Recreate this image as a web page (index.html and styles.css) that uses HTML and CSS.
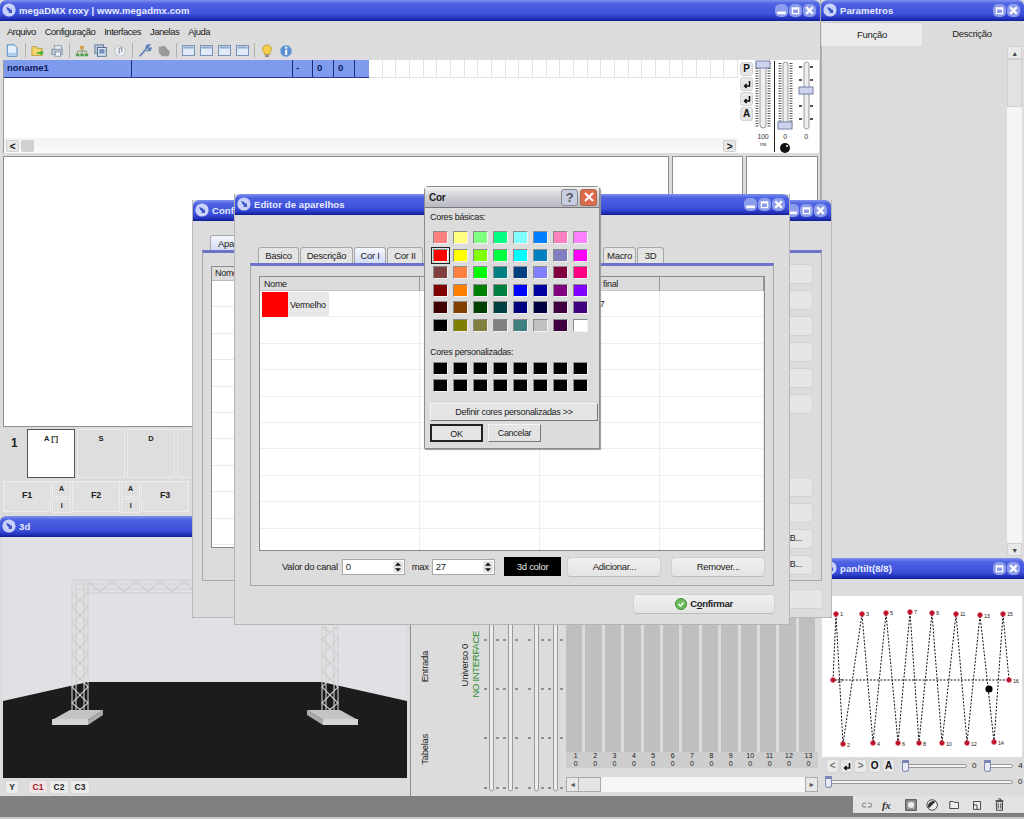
FILE: index.html
```
<!DOCTYPE html>
<html lang="pt">
<head>
<meta charset="utf-8">
<title>megaDMX roxy</title>
<link rel="stylesheet" href="styles.css">
</head>
<body>
<svg class="sprite" width="0" height="0" aria-hidden="true">
  <symbol id="g-min" viewBox="0 0 12 12"><rect x="2" y="7" width="8" height="2.4" fill="#fff"/></symbol>
  <symbol id="g-max" viewBox="0 0 12 12"><path d="M2.5 3h7v6.5h-7z M3.7 5v3.3h4.6V5z" fill="#fff" fill-rule="evenodd"/></symbol>
  <symbol id="g-close" viewBox="0 0 12 12"><path d="M3 3l6 6M9 3l-6 6" stroke="#fff" stroke-width="2.2" fill="none"/></symbol>
  <symbol id="g-app" viewBox="0 0 14 14"><circle cx="7" cy="7" r="6.6" fill="#c9d2fb"/><path d="M4 4l3.2 1 2 2.2.8-1.4V10H6l1.4-.9L5.4 7z" fill="#3c55c8"/></symbol>
  <symbol id="g-enter" viewBox="0 0 10 10"><path d="M7.5 2v5H3M4.6 5L2.6 7l2 2" stroke="#111" stroke-width="1.6" fill="none"/></symbol>
  <symbol id="g-win" viewBox="0 0 13 13"><rect x=".5" y="1.5" width="12" height="10" fill="#dfe9f7" stroke="#7a93b8"/><rect x="1.5" y="2.5" width="10" height="2" fill="#8faacb"/></symbol>
  <symbol id="g-spin" viewBox="0 0 10 12"><rect width="10" height="12" rx="3" fill="#e2e2e2"/><path d="M5 1.500l3 3.200H2zM5 10.500L2 7.300h6z" fill="#111"/></symbol>
</svg>

<div class="desktop">

  <section class="win win-main">
    <header class="titlebar">
      <svg class="tb-ico"><use href="#g-app"/></svg>
      <span class="tb-text">megaDMX roxy | www.megadmx.com</span>
      <span class="tb-btns">
        <svg class="tb-btn"><use href="#g-min"/></svg>
        <svg class="tb-btn"><use href="#g-max"/></svg>
        <svg class="tb-btn"><use href="#g-close"/></svg>
      </span>
    </header>
    <nav class="menu">
      <span>Arquivo</span><span>Configuração</span><span>Interfaces</span><span>Janelas</span><span>Ajuda</span>
    </nav>
    <div class="toolbar">
      <svg class="ti" viewBox="0 0 16 16"><path d="M1.5 1h8l3 3v10h-11z" fill="#e4f0fb" stroke="#3a7ab8"/><rect x="2" y="10" width="10" height="3" fill="#a9d0ee"/></svg>
      <i class="sep"></i>
      <svg class="ti" viewBox="0 0 16 16"><path d="M1 3h5l1 2h6v8H1z" fill="#f2d56a" stroke="#b99a35"/><path d="M7 9h4V7l3.5 3-3.5 3v-2H7z" fill="#3fae3a"/></svg>
      <svg class="ti" viewBox="0 0 16 16"><rect x="2" y="6" width="12" height="6" fill="#b8c4d2" stroke="#8595a8"/><rect x="5" y="2" width="8" height="4" fill="#e8edf3" stroke="#8595a8"/><rect x="6" y="9" width="6" height="5" fill="#eef2f6" stroke="#8595a8"/></svg>
      <i class="sep"></i>
      <svg class="ti" viewBox="0 0 16 16"><rect x="6" y="2" width="4" height="4" fill="#d49b3c"/><path d="M3 11V8h10v3M8 6v5" stroke="#7f8c6a" fill="none"/><rect x="1" y="11" width="4" height="3" fill="#4f9a47"/><rect x="6" y="11" width="4" height="3" fill="#4f9a47"/><rect x="11" y="11" width="4" height="3" fill="#4f9a47"/></svg>
      <svg class="ti" viewBox="0 0 16 16"><rect x="1" y="1" width="10" height="10" fill="#b9c9de" stroke="#5d7597"/><rect x="4" y="4" width="10" height="10" fill="#dbe6f3" stroke="#46658e"/><rect x="6" y="6" width="6" height="5" fill="#6f8fb8"/></svg>
      <svg class="ti" viewBox="0 0 16 16"><circle cx="8" cy="8" r="6" fill="#eceff3" stroke="#b5bcc6"/><path d="M7 11V5l3-1v5" stroke="#6c7480" fill="none"/></svg>
      <i class="sep"></i>
      <svg class="ti" viewBox="0 0 16 16"><path d="M2 14l7-8M9 6l1-4 3-1-2 3 2 2 2-2-1 3-4 1" stroke="#5f83ba" stroke-width="2" fill="none"/></svg>
      <svg class="ti" viewBox="0 0 16 16"><path d="M2 3l7-1 3 4 3 3-2 5H6L2 10z" fill="#9a9a9a"/></svg>
      <i class="sep"></i>
      <svg class="ti ti-win"><use href="#g-win"/></svg>
      <svg class="ti ti-win"><use href="#g-win"/></svg>
      <svg class="ti ti-win"><use href="#g-win"/></svg>
      <svg class="ti ti-win"><use href="#g-win"/></svg>
      <i class="sep"></i>
      <svg class="ti" viewBox="0 0 16 16"><path d="M8 1a5 5 0 0 1 3 9v2H5v-2a5 5 0 0 1 3-9z" fill="#f6d04c" stroke="#c79a2c"/><rect x="6" y="12" width="4" height="3" fill="#8a8a8a"/></svg>
      <svg class="ti" viewBox="0 0 16 16"><circle cx="8" cy="8" r="6.5" fill="#5a8fd2" stroke="#8fb2de"/><rect x="7" y="3" width="2.4" height="2.4" fill="#fff"/><rect x="7" y="6.5" width="2.4" height="6" fill="#fff"/></svg>
    </div>

    <div class="top-row">
      <div class="seq">
        <div class="seq-head">
          <b class="sh sh-name">noname1</b>
          <b class="sh sh-wide"></b>
          <b class="sh sh-dash">-</b>
          <b class="sh sh-num">0</b>
          <b class="sh sh-num">0</b>
          <b class="sh sh-fill"></b>
          <div class="cells"><i></i><i></i><i></i><i></i><i></i><i></i><i></i><i></i><i></i><i></i><i></i><i></i><i></i><i></i><i></i><i></i><i></i><i></i><i></i><i></i><i></i><i></i><i></i><i></i><i></i><i></i><i></i></div>
        </div>
        <div class="seq-body"></div>
        <div class="seq-scroll">
          <b class="arrow">&lt;</b><b class="arrow arrow-off"></b><span class="grow"></span><b class="arrow">&gt;</b>
        </div>
      </div>
      <div class="master">
        <div class="pbtns">
          <b class="pbtn">P</b>
          <b class="pbtn"><svg class="enter"><use href="#g-enter"/></svg></b>
          <b class="pbtn pbtn-off"><svg class="enter"><use href="#g-enter"/></svg></b>
          <b class="pbtn">A</b>
        </div>
        <svg class="master-faders" viewBox="755 60 65 93">
          <path d="M759 63v65M771 63v65" stroke="#555" stroke-width="3" stroke-dasharray="1 1.5"/>
          <rect x="762" y="62" width="6" height="66" rx="3" fill="#eee" stroke="#999"/>
          <rect x="758" y="61" width="14" height="7" fill="#cdd3ec" stroke="#7780a8"/>
          <path d="M776.5 61v91" stroke="#222"/>
          <path d="M782 63v65M793 63v65" stroke="#555" stroke-width="3" stroke-dasharray="1 1.5"/>
          <rect x="785" y="62" width="5" height="66" rx="2.5" fill="#eee" stroke="#999"/>
          <rect x="780" y="122" width="14" height="7" fill="#cdd3ec" stroke="#7780a8"/>
          <path d="M802.500 66v60M813.500 66v60" stroke="#555" stroke-width="3" stroke-dasharray="2 11"/>
          <rect x="806" y="62" width="5" height="67" rx="2.5" fill="#eee" stroke="#999"/>
          <rect x="801" y="87" width="14" height="7" fill="#cdd3ec" stroke="#7780a8"/>
          <text x="765" y="139" class="mf-t">100</text>
          <text x="765" y="146" class="mf-s">ms</text>
          <text x="787" y="139" class="mf-t">0</text>
          <text x="808" y="139" class="mf-t">0</text>
          <circle cx="787" cy="148" r="5" fill="#111"/>
          <circle cx="789" cy="146" r="1" fill="#fff"/>
        </svg>
      </div>
    </div>

    <div class="views">
      <div class="view view-a"></div>
      <div class="view view-b"></div>
      <div class="view view-c"></div>
    </div>

    <div class="scene-row">
      <b class="scene-no">1</b>
      <b class="scene scene-on">A [']</b>
      <b class="scene">S</b>
      <b class="scene">D</b>
      <b class="scene"></b>
    </div>
    <div class="fkeys">
      <b class="fk">F1</b>
      <span class="ai"><b>A</b><b>I</b></span>
      <b class="fk">F2</b>
      <span class="ai"><b>A</b><b>I</b></span>
      <b class="fk">F3</b>
    </div>
  </section>

  <section class="win win-params">
    <header class="titlebar">
      <svg class="tb-ico"><use href="#g-app"/></svg>
      <span class="tb-text">Parametros</span>
      <span class="tb-btns">
        <svg class="tb-btn"><use href="#g-max"/></svg>
        <svg class="tb-btn"><use href="#g-close"/></svg>
      </span>
    </header>
    <div class="param-tabs">
      <span class="ptab ptab-on">Função</span>
      <span class="ptab">Descrição</span>
    </div>
    <div class="param-body">
      <div class="vscroll">
        <b class="vs-btn">&#9650;</b>
        <b class="vs-thumb"></b>
        <span class="grow"></span>
        <b class="vs-btn">&#9660;</b>
      </div>
    </div>
  </section>

  <section class="win win-3d">
    <header class="titlebar">
      <svg class="tb-ico"><use href="#g-app"/></svg>
      <span class="tb-text">3d</span>
    </header>
    <svg class="stage" viewBox="3 536 404 241">
      <rect x="3" y="536" width="404" height="241" fill="#e1e1e5"/>
      <path d="M3 700L88 681H322L407 700V777H3z" fill="#1c1c1c"/>
      <g class="truss">
        <path d="M72 579H192M74 583H192M74 588H192M84 592H192"/>
        <path d="M88 580L100 591 112 580 124 591 136 580 148 591 160 580 172 591 184 580 192 588"/>
        <path d="M72 580V715M76 580V715M84 580V715M88 580V715"/>
        <path d="M72 592L88 606 72 622 88 638 72 654 88 670 72 686 88 702 72 715"/>
        <path d="M88 592L72 606 88 622 72 638 88 654 72 670 88 686 72 702 88 715"/>
        <path d="M322 625V715M326 625V715M334 625V715M338 625V715"/>
        <path d="M338 625L322 638 338 654 322 670 338 686 322 702 338 715"/>
        <path d="M322 625L338 638 322 654 338 670 322 686 338 702 322 715"/>
      </g>
      <path d="M52 719L70 709H103L88 719z" fill="#c4c4c4"/>
      <path d="M52 718H88V724H52z" fill="#d4d4d4"/>
      <path d="M88 719L103 709V714L88 724z" fill="#aaa"/>
      <path d="M358 719L340 709H307L323 719z" fill="#c4c4c4"/>
      <path d="M323 718H358V724H323z" fill="#d4d4d4"/>
      <path d="M323 719L307 709V714L323 724z" fill="#aaa"/>
    </svg>
    <div class="cam-bar">
      <b class="cam">Y</b>
      <b class="cam cam-on">C1</b>
      <b class="cam">C2</b>
      <b class="cam">C3</b>
    </div>
  </section>

  <section class="win win-mix">
    <div class="mix-labels">
      <span class="vtext vt-entrada">Entrada</span>
      <span class="vtext vt-tabelas">Tabelas</span>
    </div>
    <div class="mix-uni">
      <span class="vtext vt-uni">Universo 0</span>
      <span class="vtext vt-noif">NO INTERFACE</span>
    </div>
    <svg class="mix-faders" viewBox="484 600 82 196">
      <g class="ftrack">
        <rect x="489.500" y="600" width="4" height="191" rx="2"/>
        <rect x="508.500" y="600" width="4" height="191" rx="2"/>
        <rect x="534.500" y="600" width="4" height="191" rx="2"/>
        <rect x="553.500" y="600" width="4" height="191" rx="2"/>
      </g>
      <path class="fticks" d="M484 640h3M496 640h3M503 640h3M515 640h3M528 640h3M541 640h3M548 640h3M560 640h3M484 689h3M496 689h3M503 689h3M515 689h3M528 689h3M541 689h3M548 689h3M560 689h3M484 738h3M496 738h3M503 738h3M515 738h3M528 738h3M541 738h3M548 738h3M560 738h3M484 788h3M496 788h3M503 788h3M515 788h3M528 788h3M541 788h3M548 788h3M560 788h3"/>
    </svg>
    <div class="mix-strips">
      <div class="strips">
        <div class="strip"><i></i><span>1<br>0</span></div>
        <div class="strip"><i></i><span>2<br>0</span></div>
        <div class="strip"><i></i><span>3<br>0</span></div>
        <div class="strip"><i></i><span>4<br>0</span></div>
        <div class="strip"><i></i><span>5<br>0</span></div>
        <div class="strip"><i></i><span>6<br>0</span></div>
        <div class="strip"><i></i><span>7<br>0</span></div>
        <div class="strip"><i></i><span>8<br>0</span></div>
        <div class="strip"><i></i><span>9<br>0</span></div>
        <div class="strip"><i></i><span>10<br>0</span></div>
        <div class="strip"><i></i><span>11<br>0</span></div>
        <div class="strip"><i></i><span>12<br>0</span></div>
        <div class="strip"><i></i><span>13<br>0</span></div>
      </div>
      <div class="hscroll">
        <b class="hs-btn">&#9668;</b><b class="hs-thumb"></b><span class="grow"></span><b class="hs-btn">&#9658;</b>
      </div>
    </div>
  </section>

  <section class="win win-pan">
    <header class="titlebar">
      <svg class="tb-ico"><use href="#g-app"/></svg>
      <span class="tb-text tb-pan">pan/tilt(8/8)</span>
      <span class="tb-btns">
        <svg class="tb-btn"><use href="#g-max"/></svg>
        <svg class="tb-btn"><use href="#g-close"/></svg>
      </span>
    </header>
    <svg class="pan-canvas" viewBox="822 596 200 161">
      <rect x="822" y="596" width="200" height="161" fill="#fff"/>
      <path class="pan-line" d="M833 680L836 614 843 744 862 614 873 743 886 613 898 743 910 612 919 743 932 613 942 743 956 614 967 743 980 615 994 742 1003 614 1009 680Z"/>
      <g class="pan-pts">
        <path d="M836 611.500v5M833.500 614h5M843 741.500v5M840.500 744h5M862 611.500v5M859.500 614h5M873 740.500v5M870.500 743h5M886 610.500v5M883.500 613h5M898 740.500v5M895.500 743h5M910 609.500v5M907.500 612h5M919 740.500v5M916.500 743h5M932 610.500v5M929.500 613h5M942 740.500v5M939.500 743h5M956 611.500v5M953.500 614h5M967 740.500v5M964.500 743h5M980 612.500v5M977.500 615h5M994 739.500v5M991.500 742h5M1003 611.500v5M1000.500 614h5M1009 677.500v5M1006.500 680h5M833 677.500v5M830.500 680h5"/>
      </g>
      <g class="pan-lbl">
        <text x="840" y="616">1</text><text x="847" y="747">2</text><text x="866" y="616">3</text><text x="877" y="746">4</text><text x="890" y="615">5</text><text x="902" y="746">6</text><text x="914" y="614">7</text><text x="923" y="746">8</text><text x="936" y="615">9</text><text x="946" y="746">10</text><text x="960" y="616">11</text><text x="971" y="746">12</text><text x="984" y="618">13</text><text x="998" y="745">14</text><text x="1007" y="616">15</text><text x="1013" y="683">16</text><text x="837" y="683">17</text>
      </g>
      <circle cx="989" cy="689" r="3.6" fill="#000"/>
    </svg>
    <div class="pan-ctrl">
      <b class="pbtn pbtn-off">&lt;</b>
      <b class="pbtn"><svg class="enter"><use href="#g-enter"/></svg></b>
      <b class="pbtn pbtn-off">&gt;</b>
      <b class="pbtn">O</b>
      <b class="pbtn">A</b>
      <span class="slider slider-a"><i class="knob"></i></span>
      <span class="sl-val">0</span>
      <span class="slider slider-b"><i class="knob"></i></span>
      <span class="sl-val">4</span>
    </div>
    <div class="pan-ctrl pan-ctrl-2">
      <span class="slider slider-c"><i class="knob"></i></span>
      <span class="sl-val">0</span>
    </div>
  </section>

  <div class="layers">
    <svg class="li" viewBox="0 0 16 16"><path d="M2 8a3 3 0 0 1 3-3h2v1.500H5a1.500 1.500 0 0 0 0 3h2V11H5a3 3 0 0 1-3-3zM9 5h2a3 3 0 0 1 0 6H9V9.500h2a1.500 1.500 0 0 0 0-3H9z" fill="#999"/></svg>
    <span class="li-fx">fx</span>
    <svg class="li" viewBox="0 0 16 16"><rect x="2" y="2" width="12" height="12" fill="#999" stroke="#333"/><circle cx="8" cy="8" r="3.500" fill="#eee"/></svg>
    <svg class="li" viewBox="0 0 16 16"><circle cx="7" cy="8" r="6" fill="#eee" stroke="#333"/><path d="M3 12A6 6 0 0 1 11 4z" fill="#333"/></svg>
    <svg class="li" viewBox="0 0 16 16"><path d="M2 4h4l1 1h5v7H2z" fill="#eee" stroke="#333"/></svg>
    <svg class="li" viewBox="0 0 16 16"><path d="M4 4h8v9H4z" fill="#eee" stroke="#333"/><path d="M4 8h4v5" fill="none" stroke="#333"/></svg>
    <svg class="li" viewBox="0 0 16 16"><path d="M5 4h7v10H5zM4 3h9M7 1h3v2" fill="#ddd" stroke="#333"/><path d="M7 6v6M10 6v6" stroke="#333"/></svg>
  </div>

  <section class="win win-config">
    <header class="titlebar">
      <svg class="tb-ico"><use href="#g-app"/></svg>
      <span class="tb-text">Config</span>
      <span class="tb-btns">
        <svg class="tb-btn"><use href="#g-min"/></svg>
        <svg class="tb-btn"><use href="#g-max"/></svg>
        <svg class="tb-btn"><use href="#g-close"/></svg>
      </span>
    </header>
    <div class="cfg-tabs"><span class="tab tab-on tab-cfg">Aparelhos</span></div>
    <div class="cfg-panel">
      <div class="cfg-table">
        <div class="cfg-head">Nome</div>
        <div class="cfg-rows"><i></i><i></i><i></i><i></i><i></i><i></i><i></i><i></i><i></i><i></i></div>
      </div>
      <div class="cfg-btns">
        <b class="cfg-btn"></b><b class="cfg-btn"></b><b class="cfg-btn"></b><b class="cfg-btn"></b><b class="cfg-btn"></b><b class="cfg-btn"></b>
        <span class="grow"></span>
        <b class="cfg-btn"></b><b class="cfg-btn"></b><b class="cfg-btn">B...</b><b class="cfg-btn">B...</b>
      </div>
    </div>
    <div class="cfg-foot"><b class="cfg-ok"></b></div>
  </section>

  <section class="win win-editor">
    <header class="titlebar">
      <svg class="tb-ico"><use href="#g-app"/></svg>
      <span class="tb-text">Editor de aparelhos</span>
      <span class="tb-btns">
        <svg class="tb-btn"><use href="#g-min"/></svg>
        <svg class="tb-btn"><use href="#g-max"/></svg>
        <svg class="tb-btn"><use href="#g-close"/></svg>
      </span>
    </header>
    <div class="ed-tabs">
      <span class="tab t-basico">Basico</span>
      <span class="tab t-desc">Descrição</span>
      <span class="tab tab-on t-cor1">Cor I</span>
      <span class="tab t-cor2">Cor II</span>
      <span class="tab-gap"></span>
      <span class="tab t-macro">Macro</span>
      <span class="tab t-3d">3D</span>
    </div>
    <div class="ed-panel">
      <div class="ed-table">
        <div class="ed-row ed-head"><span>Nome</span><span></span><span class="val-final">Valor final</span><span></span></div>
        <div class="ed-row"><span class="color-cell"><i class="red"></i><em>Vermelho</em></span><span></span><span class="val-27">27</span><span></span></div>
        <div class="ed-row"><span></span><span></span><span></span><span></span></div>
        <div class="ed-row"><span></span><span></span><span></span><span></span></div>
        <div class="ed-row"><span></span><span></span><span></span><span></span></div>
        <div class="ed-row"><span></span><span></span><span></span><span></span></div>
        <div class="ed-row"><span></span><span></span><span></span><span></span></div>
        <div class="ed-row"><span></span><span></span><span></span><span></span></div>
        <div class="ed-row"><span></span><span></span><span></span><span></span></div>
        <div class="ed-row"><span></span><span></span><span></span><span></span></div>
        <div class="ed-row"><span></span><span></span><span></span><span></span></div>
      </div>
      <div class="ed-form">
        <label class="f-label">Valor do canal</label>
        <span class="spin"><span>0</span><svg class="spin-btn"><use href="#g-spin"/></svg></span>
        <label class="f-label f-max">max</label>
        <span class="spin"><span>27</span><svg class="spin-btn"><use href="#g-spin"/></svg></span>
        <b class="btn-3d">3d color</b>
        <b class="xbtn btn-add">Adicionar...</b>
        <b class="xbtn btn-rem">Remover...</b>
      </div>
    </div>
    <div class="ed-foot">
      <b class="xbtn btn-ok">
        <svg class="ok-ico" viewBox="0 0 12 12"><circle cx="6" cy="6" r="5.500" fill="#6dbb5a" stroke="#3e8e3a"/><path d="M3.500 6l2 2 3-3.500" stroke="#fff" stroke-width="1.500" fill="none"/></svg>
        <span>C<u>o</u>nfirmar</span>
      </b>
    </div>
  </section>

  <section class="dlg">
    <header class="dlg-title">
      <span>Cor</span>
      <b class="dlg-help">?</b>
      <b class="dlg-close"><svg class="dlg-x" viewBox="0 0 12 12"><path d="M2 2l8 8M10 2l-8 8" stroke="#fff" stroke-width="2"/></svg></b>
    </header>
    <div class="dlg-body">
      <p class="dlg-label">Cores básicas:</p>
      <div class="swatches">
        <i class="sw c1"></i><i class="sw c2"></i><i class="sw c3"></i><i class="sw c4"></i><i class="sw c5"></i><i class="sw c6"></i><i class="sw c7"></i><i class="sw c8"></i>
        <i class="sw c9 sw-sel"></i><i class="sw c10"></i><i class="sw c11"></i><i class="sw c12"></i><i class="sw c13"></i><i class="sw c14"></i><i class="sw c15"></i><i class="sw c16"></i>
        <i class="sw c17"></i><i class="sw c18"></i><i class="sw c19"></i><i class="sw c20"></i><i class="sw c21"></i><i class="sw c22"></i><i class="sw c23"></i><i class="sw c24"></i>
        <i class="sw c25"></i><i class="sw c26"></i><i class="sw c27"></i><i class="sw c28"></i><i class="sw c29"></i><i class="sw c30"></i><i class="sw c31"></i><i class="sw c32"></i>
        <i class="sw c33"></i><i class="sw c34"></i><i class="sw c35"></i><i class="sw c36"></i><i class="sw c37"></i><i class="sw c38"></i><i class="sw c39"></i><i class="sw c40"></i>
        <i class="sw c41"></i><i class="sw c42"></i><i class="sw c43"></i><i class="sw c44"></i><i class="sw c45"></i><i class="sw c46"></i><i class="sw c47"></i><i class="sw c48"></i>
      </div>
      <p class="dlg-label dlg-label-2">Cores personalizadas:</p>
      <div class="swatches">
        <i class="sw c41"></i><i class="sw c41"></i><i class="sw c41"></i><i class="sw c41"></i><i class="sw c41"></i><i class="sw c41"></i><i class="sw c41"></i><i class="sw c41"></i>
        <i class="sw c41"></i><i class="sw c41"></i><i class="sw c41"></i><i class="sw c41"></i><i class="sw c41"></i><i class="sw c41"></i><i class="sw c41"></i><i class="sw c41"></i>
      </div>
      <b class="dbtn dbtn-def">Definir cores personalizadas &gt;&gt;</b>
      <div class="dlg-actions">
        <b class="dbtn dbtn-ok">OK</b>
        <b class="dbtn dbtn-cancel">Cancelar</b>
      </div>
    </div>
  </section>

</div>
</body>
</html>
```
FILE: styles.css
```
* { box-sizing: border-box; }
html, body { margin: 0; padding: 0; }
body { font: 9px/1.2 "Liberation Sans", Arial, sans-serif; letter-spacing: -.3px; color: #222; }
.sprite { position: absolute; }
i, em, b { font-style: normal; }
p { margin: 0; }
.grow { flex: 1; }

.desktop {
  position: relative;
  width: 1024px;
  height: 819px;
  overflow: hidden;
  background: #808080;
  border-bottom: 2px solid #c8c8c8;
}

/* Windows */
.win { position: absolute; display: flex; flex-direction: column; background: #dcdcdc; }
.titlebar {
  flex: none;
  display: flex;
  align-items: center;
  height: 21px;
  padding: 0 3px 1px 2px;
  border-radius: 6px 6px 0 0;
  background: linear-gradient(#7f92ee 0, #4d62e2 18%, #3d50dc 68%, #2433bb 88%, #101c92 100%);
}
.tb-ico { width: 14px; height: 14px; flex: none; }
.tb-text {
  margin-left: 3px;
  font: bold 9.500px "Liberation Sans", sans-serif;
  letter-spacing: .1px;
  color: #e8ecff;
}
.tb-btns { display: flex; gap: 1px; margin-left: auto; margin-right: 1px; }
.tb-btn { width: 13px; height: 13px; border-radius: 5px; background: #8d9dec; }

.win-main { left: 0; top: 0; width: 821px; height: 796px; border-right: 1px solid #a8a8a8; }
.win-params { left: 821px; top: 0; width: 203px; height: 558px; }
.win-3d { left: 0; top: 516px; width: 411px; height: 280px; border-right: 1px solid #8c8c8c; }
.win-mix { left: 411px; top: 600px; width: 410px; height: 196px; flex-direction: row; }
.win-pan { left: 821px; top: 558px; width: 203px; height: 238px; }
.win-config { left: 192px; top: 200px; width: 640px; height: 418px; border: 1px solid #b8b8b8; border-top: 0; }
.win-editor { left: 234px; top: 194px; width: 556px; height: 431px; border: 1px solid #b4b4b4; border-top: 0; }

/* Main */
.menu { display: flex; gap: 9px; height: 21px; padding: 5px 0 0 7px; font-size: 9.500px; letter-spacing: -.5px; }
.toolbar { display: flex; align-items: center; height: 17px; padding-left: 6px; gap: 5px; }
.ti { width: 14px; height: 14px; flex: none; }
.ti-win { width: 13px; height: 13px; }
.sep { width: 1px; height: 15px; background: #b0b0b0; }

.top-row { display: flex; height: 93px; margin: 1px 0 0 3px; }
.seq { width: 735px; display: flex; flex-direction: column; background: #fff; border-left: 1px solid #999; }
.seq-head { display: flex; height: 18px; border-bottom: 1px solid #2a3a90; background: #7f9bee; }
.sh { height: 100%; padding: 2px 3px 0; font-size: 9.500px; letter-spacing: 0; border-right: 1px solid #1c2c80; color: #0c1a60; }
.sh-name { width: 128px; }
.sh-wide { width: 161px; }
.sh-dash { width: 20px; }
.sh-num { width: 21px; padding-left: 4px; }
.sh-fill { width: 14px; border-right: 0; }
.cells { flex: 1; display: flex; margin-bottom: -1px; background: #fff; }
.cells i { flex: 1; border-right: 1px solid #e2e2e2; border-bottom: 1px solid #e2e2e2; }
.seq-body { flex: 1; }
.seq-scroll { display: flex; align-items: center; height: 15px; padding: 0 1px; background: linear-gradient(#f2f2f2, #fbfbfb); }
.arrow { width: 13px; height: 12px; margin: 0 1px; font-size: 10px; line-height: 11px; text-align: center; background: #e8e8e8; border: 1px solid #cfcfcf; border-radius: 2px; color: #111; }
.arrow-off { background: #d0d0d0; }

.master { flex: 1; display: flex; background: #fff; margin-right: 1px; }
.pbtns { display: flex; flex-direction: column; gap: 1px; padding: 2px 0 0 2px; background: #fff; }
.pbtn {
  display: flex;
  align-items: center;
  justify-content: center;
  width: 13px;
  height: 14px;
  font-size: 10px;
  background: #e6e6e6;
  border: 1px solid #d2d2d2;
  border-radius: 3px;
  color: #111;
}
.pbtn-off { color: #777; background: #eaeaea; }
.enter { width: 10px; height: 10px; }
.master-faders { width: 65px; height: 93px; flex: none; }
.mf-t { font-size: 7px; text-anchor: middle; fill: #333; }
.mf-s { font-size: 5px; text-anchor: middle; fill: #333; }

.views { display: flex; gap: 3px; height: 271px; margin: 3px 2px 0 3px; }
.view { background: #fff; border: 1px solid #8f8f8f; }
.view-a { width: 666px; }
.view-b { width: 71px; }
.view-c { flex: 1; }

.scene-row { display: flex; gap: 2px; height: 50px; margin: 2px 0 0 3px; }
.scene-no { width: 22px; padding: 7px 0 0 8px; font-size: 12px; }
.scene { width: 48px; height: 49px; padding-top: 4px; font-size: 7.500px; letter-spacing: 0; text-align: center; background: #dedede; border: 1px solid #ebebeb; }
.scene-on { background: #fff; border: 1px solid #555; }
.fkeys { display: flex; gap: 1px; height: 32px; margin: 2px 0 0 3px; }
.fk { width: 48px; height: 31px; padding-top: 8px; font-size: 9px; text-align: center; background: #e0e0e0; border: 1px solid #ededed; }
.ai { width: 19px; display: flex; flex-direction: column; gap: 1px; }
.ai b { flex: 1; font-size: 7px; text-align: center; padding-top: 3px; background: #e0e0e0; border: 1px solid #ededed; }

/* Parametros */
.param-tabs { display: flex; height: 25px; padding: 1px 0 0 1px; font-size: 9.500px; }
.ptab { width: 100px; padding-top: 6px; text-align: center; }
.ptab-on { background: #ebebeb; border-top: 1px solid #c8c8c8; }
.param-body { flex: 1; display: flex; justify-content: flex-end; padding: 0 2px 2px 0; border-left: 1px solid #b0b0b0; }
.vscroll { width: 15px; display: flex; flex-direction: column; background: #f5f5f5; }
.vs-btn { height: 13px; font-size: 7px; line-height: 13px; text-align: center; color: #444; background: #e8e8e8; border: 1px solid #d0d0d0; }
.vs-thumb { height: 48px; background: #e2e2e2; border: 1px solid #d0d0d0; }

/* 3D */
.stage { display: block; width: 404px; height: 241px; margin: 0 0 0 3px; flex: none; }
.truss path { fill: none; stroke: #cfcfcf; stroke-width: 1.100; }
.cam-bar { display: flex; gap: 1px; height: 19px; padding: 2px 0 0 5px; background: #dcdcdc; }
.cam { width: 14px; height: 14px; font-size: 8.500px; letter-spacing: 0; line-height: 13px; text-align: center; background: #ececec; border: 1px solid #d6d6d6; border-radius: 3px; }
.cam:nth-child(2) { margin-left: 8px; }
.cam-on { color: #a3162a; background: #f0e4e4; }
.cam:nth-child(n+2) { width: 20px; }

/* Mix panel */
.vtext { display: block; writing-mode: vertical-rl; transform: rotate(180deg); white-space: nowrap; }
.mix-labels { width: 24px; padding: 51px 0 0 8px; font-size: 9.500px; }
.vt-tabelas { margin-top: 52px; }
.mix-uni { width: 49px; display: flex; justify-content: flex-end; font-size: 9.500px; line-height: 11px; align-items: flex-end; padding: 0 3px 98px 0; }
.vt-uni { margin-bottom: 12px; }
.vt-noif { color: #2c8f2c; }
.mix-faders { width: 82px; height: 196px; flex: none; }
.ftrack rect { fill: #ececec; stroke: #9a9a9a; }
.fticks { stroke: #444; stroke-width: 1; }
.mix-strips { flex: 1; display: flex; flex-direction: column; padding-right: 3px; }
.strips { display: flex; height: 168px; }
.strip { flex: 1; display: flex; flex-direction: column; }
.strip i { flex: 1; background: #bfbfbf; margin-right: 3px; }
.strip span { height: 16px; font-size: 7px; line-height: 8px; letter-spacing: 0; text-align: center; background: #cdcdcd; }
.hscroll { display: flex; height: 15px; margin-top: 9px; background: #f6f6f6; }
.hs-btn { width: 13px; font-size: 7px; line-height: 13px; text-align: center; color: #555; background: #e8e8e8; border: 1px solid #aaa; }
.hs-thumb { width: 22px; background: #e4e4e4; border: 1px solid #aaa; border-left: 0; }

/* Pan tilt */
.pan-canvas { display: block; width: 200px; height: 161px; margin: 17px 0 0 1px; flex: none; }
.pan-line { fill: none; stroke: #111; stroke-width: 1; stroke-dasharray: 2 1.500; }
.pan-pts path { stroke: #c0102a; stroke-width: 3; fill: none; }
.pan-lbl text { font-size: 5.500px; fill: #222; }
.pan-ctrl { display: flex; align-items: center; gap: 1px; height: 16px; margin-top: 1px; padding-left: 5px; font-size: 8px; }
.pan-ctrl-2 { margin-top: 0; padding-left: 4px; }
.slider { position: relative; display: block; height: 4px; background: #eee; border: 1px solid #999; border-radius: 2px; }
.slider-a { width: 65px; margin-left: 6px; }
.slider-b { width: 29px; margin-left: 7px; background: #fff; }
.slider-c { width: 188px; }
.sl-val { margin-left: 4px; }
.knob { position: absolute; left: -1px; top: -5px; width: 7px; height: 12px; background: #e8eaf6; border: 1px solid #8088b8; border-top: 3px solid #7a84b8; border-radius: 1px 1px 3px 3px; }

.layers {
  position: absolute;
  left: 853px;
  top: 796px;
  width: 171px;
  height: 18px;
  display: flex;
  align-items: center;
  gap: 8px;
  padding-left: 7px;
  background: #e2e2e2;
  border-bottom: 1px solid #777;
}
.li { width: 14px; height: 14px; flex: none; }
.li-fx { width: 14px; font: italic bold 11px "Liberation Serif", serif; color: #333; }

/* Tabs */
.tab { display: block; padding-top: 2px; height: 16px; text-align: center; font-size: 9.500px; background: #e4e4e4; border: 1px solid #a8a8a8; border-bottom: 0; border-radius: 3px 3px 0 0; }
.tab-on { background: linear-gradient(#f6f8ff, #d2dcf6); }

/* Config */
.cfg-tabs { height: 15px; margin: 14px 0 0 17px; }
.tab-cfg { width: 60px; height: 15px; text-align: left; padding-left: 7px; }
.cfg-panel { flex: none; display: flex; height: 331px; margin: 0 9px; padding: 13px 8px 0 8px; border: 1px solid #a8a8a8; border-top: 3px solid #6d74c8; gap: 4px; }
.cfg-table { flex: 1; height: 282px; background: #fff; border: 1px solid #8a8a8a; }
.cfg-head { height: 14px; padding: 1px 3px; font-size: 9px; background: #dcdcdc; border-bottom: 1px solid #bbb; }
.cfg-rows i { display: block; height: 26.400px; border-bottom: 1px solid #eaeaea; }
.cfg-btns { width: 50px; display: flex; flex-direction: column; gap: 6px; margin-top: -2px; padding-bottom: 5px; }
.cfg-btn { height: 20px; padding: 3px 10px 0 0; text-align: right; font-size: 9px; font-weight: normal; background: #e6e6e6; border: 1px solid #d2d2d2; border-radius: 4px; }
.cfg-foot { display: flex; justify-content: flex-end; padding: 8px 8px 0 0; }
.cfg-ok { width: 140px; height: 20px; background: #e6e6e6; border: 1px solid #d2d2d2; border-radius: 3px; }

/* Editor */
.ed-tabs { display: flex; gap: 1px; height: 16px; margin: 32px 0 0 23px; }
.t-basico { width: 41px; }
.t-desc { width: 53px; }
.t-cor1 { width: 32px; }
.t-cor2 { width: 36px; }
.tab-gap { width: 178px; }
.t-macro { width: 33px; }
.t-3d { width: 27px; }
.ed-panel { flex: none; height: 323px; margin: 0 15px; padding: 10px 8px 0 8px; border: 1px solid #a8a8a8; border-top: 3px solid #6d74c8; }
.ed-table { height: 275px; overflow: hidden; background: #fff; border: 1px solid #8a8a8a; }
.ed-row { display: grid; grid-template-columns: 160px 120px 120px 1fr; height: 26.400px; border-bottom: 1px solid #ededed; }
.ed-row > span { border-right: 1px solid #ececec; padding: 0 4px; line-height: 26px; }
.ed-head { height: 14px; background: #dcdcdc; border-bottom: 1px solid #c8c8c8; }
.ed-head > span { line-height: 14px; border-right: 1px solid #999; }
.color-cell { display: flex; height: 25px; padding: 1px 0 0 2px !important; }
.color-cell .red { width: 26px; height: 25px; background: #f00; }
.color-cell em { width: 41px; padding-left: 2px; line-height: 26px; background: #e8e8e8; }
.val-final { padding-left: 42px !important; }
.val-27 { padding-left: 55px !important; }

.ed-form { display: flex; align-items: center; height: 31px; margin-top: 0; padding-left: 23px; font-size: 9.500px; }
.f-label { margin-right: 4px; white-space: nowrap; }
.f-max { margin: 0 3px 0 7px; }
.spin { position: relative; display: block; width: 63px; height: 16px; padding: 1px 3px; background: #fff; border: 1px solid #a8a8a8; }
.spin-btn { position: absolute; right: 1px; top: 1px; width: 10px; height: 12px; }
.btn-3d { width: 58px; height: 19px; margin-left: 9px; line-height: 19px; text-align: center; font-weight: normal; font-size: 9.500px; color: #e4e4e4; background: #000; }
.xbtn { display: block; height: 20px; font-weight: normal; font-size: 9.500px; line-height: 18px; text-align: center; background: linear-gradient(#f0f0f0, #e4e4e4); border: 1px solid #d0d0d0; border-bottom-color: #bbb; border-radius: 4px; }
.btn-add { width: 94px; margin-left: 6px; }
.btn-rem { width: 94px; margin-left: 10px; }
.ed-foot { display: flex; justify-content: flex-end; padding: 8px 14px 0 0; }
.btn-ok { display: flex; align-items: center; justify-content: center; gap: 3px; width: 142px; font-weight: bold; }
.ok-ico { width: 12px; height: 12px; }

/* Colour dialog */
.dlg { position: absolute; left: 424px; top: 186px; width: 176px; height: 263px; background: #dcdcdc; border: 1px solid #8c8c8c; border-radius: 4px 4px 0 0; box-shadow: 1px 1px 1px #999; }
.dlg-title { display: flex; align-items: center; height: 21px; padding: 0 2px 0 4px; background: linear-gradient(#f2f2f2, #cfd0d6 50%, #b8b9c2); border-bottom: 1px solid #777; font: bold 10px "Liberation Sans", sans-serif; color: #222; }
.dlg-title span { flex: 1; }
.dlg-help { width: 17px; height: 17px; font-size: 13px; line-height: 15px; text-align: center; font-weight: bold; color: #555; background: #c7cde2; border: 1px solid #888; border-radius: 3px; margin-right: 2px; }
.dlg-close { display: flex; align-items: center; justify-content: center; width: 17px; height: 17px; background: #df6a4d; border: 1px solid #a64; border-radius: 3px; }
.dlg-x { width: 12px; height: 12px; }
.dlg-body { padding: 4px 0 0 5px; }
.dlg-label { height: 16px; font-size: 9px; }
.dlg-label-2 { margin-top: 10px; height: 12px; }
.swatches { display: grid; grid-template-columns: repeat(8, 14px); grid-auto-rows: 17.600px; column-gap: 6px; margin: 3px 0 0 3px; }
.sw { display: block; width: 15px; height: 13px; border: 1px solid; border-color: #8c8c8c #f2f2f2 #f2f2f2 #8c8c8c; }
.sw-sel { outline: 1px solid #222; outline-offset: 1px; }
.c1 { background: #ff8080; } .c2 { background: #ffff80; } .c3 { background: #80ff80; } .c4 { background: #00ff80; }
.c5 { background: #80ffff; } .c6 { background: #0080ff; } .c7 { background: #ff80c0; } .c8 { background: #ff80ff; }
.c9 { background: #ff0000; } .c10 { background: #ffff00; } .c11 { background: #80ff00; } .c12 { background: #00ff40; }
.c13 { background: #00ffff; } .c14 { background: #0080c0; } .c15 { background: #8080c0; } .c16 { background: #ff00ff; }
.c17 { background: #804040; } .c18 { background: #ff8040; } .c19 { background: #00ff00; } .c20 { background: #008080; }
.c21 { background: #004080; } .c22 { background: #8080ff; } .c23 { background: #800040; } .c24 { background: #ff0080; }
.c25 { background: #800000; } .c26 { background: #ff8000; } .c27 { background: #008000; } .c28 { background: #008040; }
.c29 { background: #0000ff; } .c30 { background: #0000a0; } .c31 { background: #800080; } .c32 { background: #8000ff; }
.c33 { background: #400000; } .c34 { background: #804000; } .c35 { background: #004000; } .c36 { background: #004040; }
.c37 { background: #000080; } .c38 { background: #000040; } .c39 { background: #400040; } .c40 { background: #400080; }
.c41 { background: #000000; } .c42 { background: #808000; } .c43 { background: #808040; } .c44 { background: #808080; }
.c45 { background: #408080; } .c46 { background: #c0c0c0; } .c47 { background: #400040; } .c48 { background: #ffffff; }
.dbtn { display: block; height: 18px; font-weight: normal; font-size: 9px; line-height: 17px; text-align: center; background: #e4e4e4; border: 1px solid; border-color: #f4f4f4 #777 #777 #f4f4f4; }
.dbtn-def { width: 168px; margin-top: 6px; }
.dlg-actions { display: flex; gap: 5px; margin-top: 3px; }
.dbtn-ok { width: 53px; border: 2px solid #222; }
.dbtn-cancel { width: 53px; }
```
